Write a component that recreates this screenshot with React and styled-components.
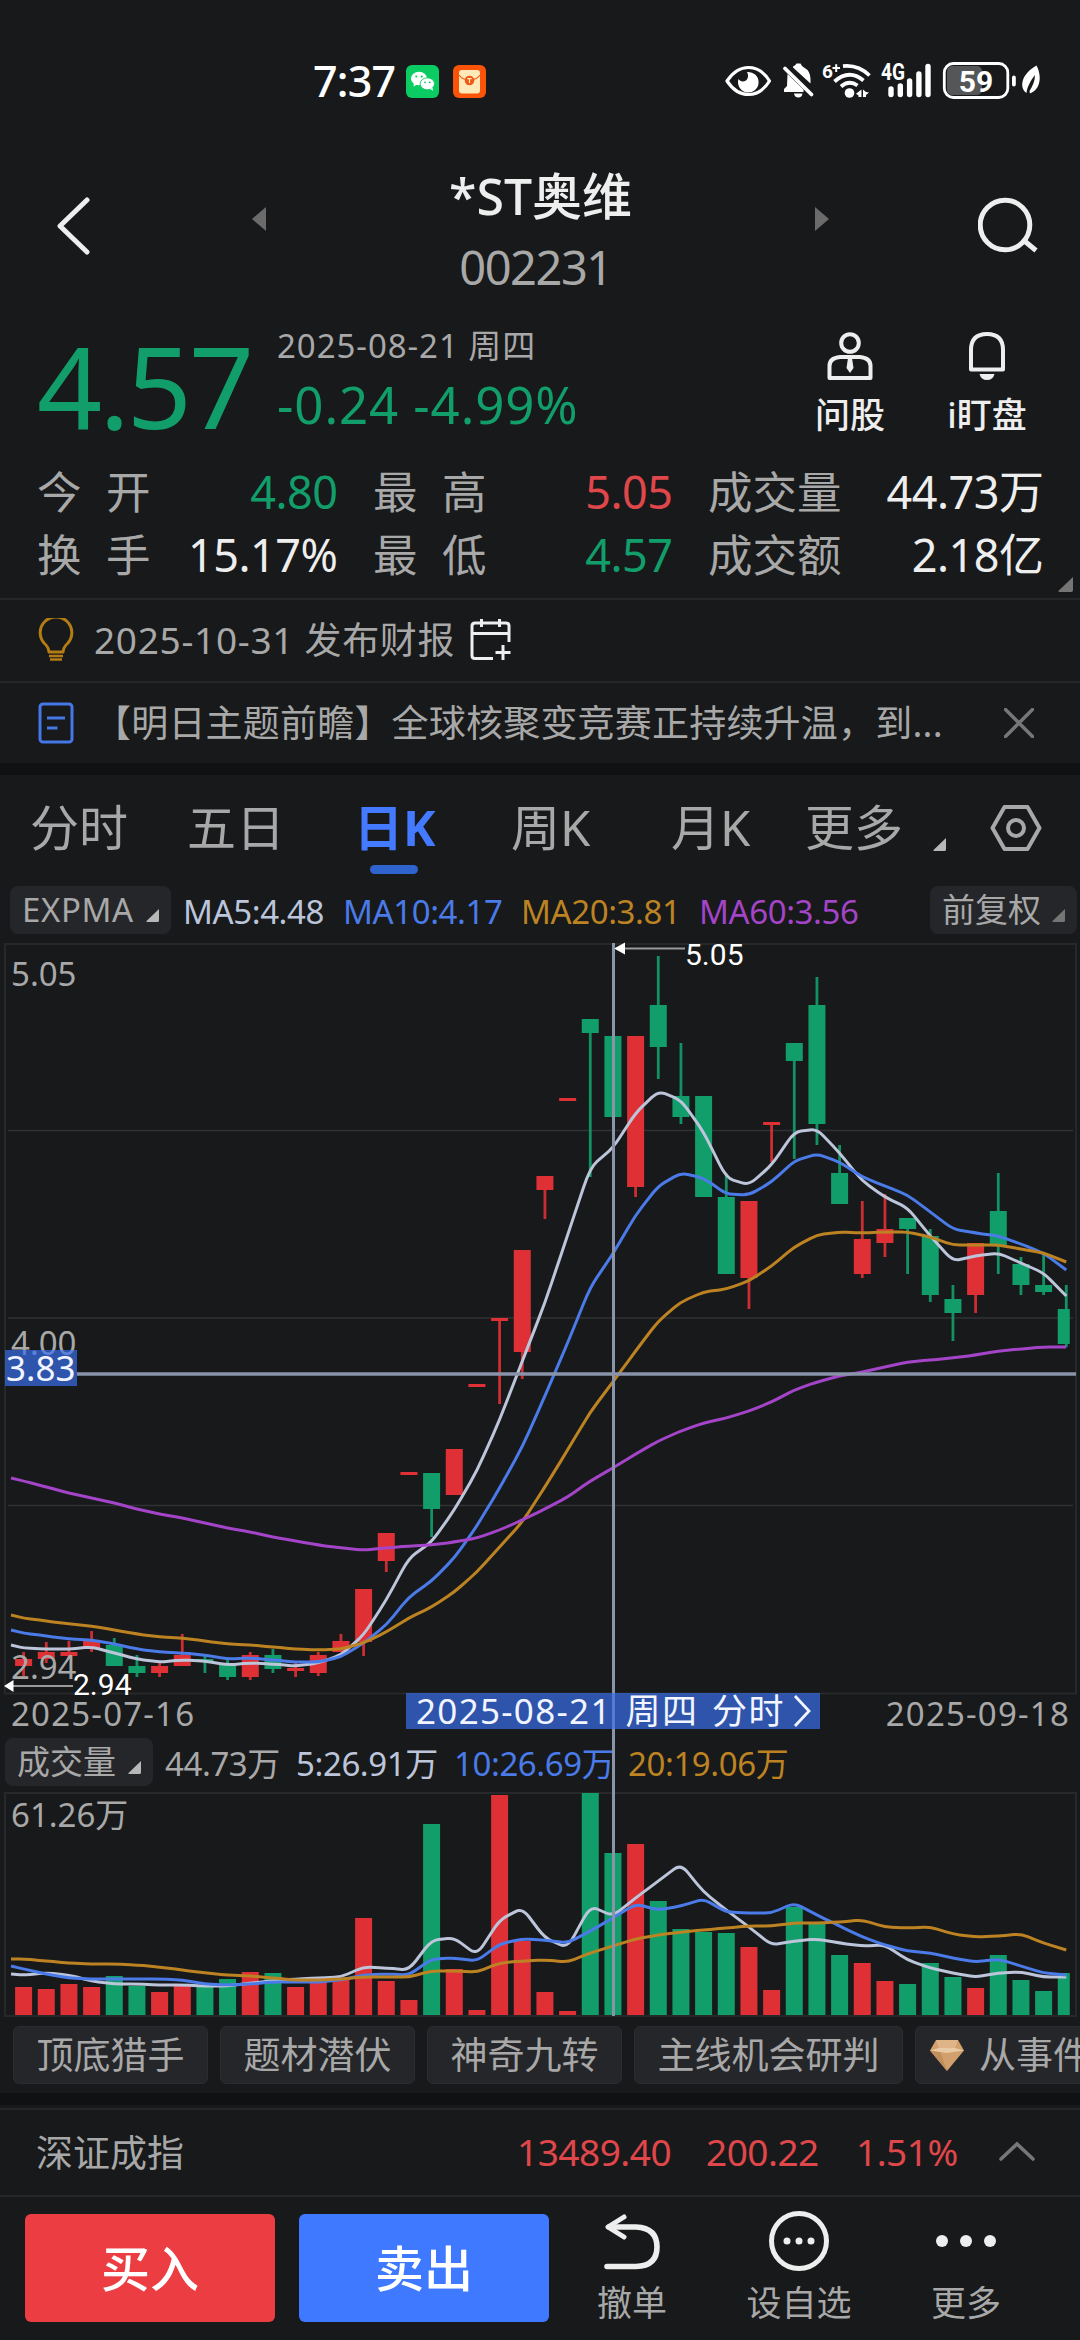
import React from 'react';
import styled, { createGlobalStyle, ThemeProvider } from 'styled-components';

const theme = {
  colors: {
    bg: '#17191a',
    band: '#101112',
    line: '#26282a',
    chip: '#252629',
    white: '#eeeeee',
    gray: '#a8a8a8',
    dim: '#6e6e6e',
    green: '#129e6a',
    red: '#df3135',
    redText: '#e0474a',
    blue: '#437aff',
    ma5: '#bcc5da',
    ma10: '#4a7be8',
    ma20: '#bd8323',
    ma60: '#a444c8',
    cross: '#8993a9',
  },
};

const FONT = '"Noto Sans", "Noto Sans CJK SC", sans-serif';

const STEP = 22.667;
const FIRST = 23.6;
const cx = (i) => FIRST + STEP * i;

// [up, high, body top, body bottom, low, volume top]
const CANDLES = [
  [1, 1652, 1659, 1666, 1676, 1987],
  [1, 1642, 1652, 1659, 1663, 1989],
  [1, 1641, 1652, 1656, 1659, 1984],
  [1, 1631, 1641, 1649, 1652, 1987],
  [0, 1638, 1645, 1666, 1666, 1976],
  [0, 1655, 1666, 1673, 1677, 1986],
  [1, 1663, 1666, 1673, 1677, 1992],
  [1, 1634, 1655, 1666, 1666, 1986],
  [0, 1655, 1659, 1661, 1673, 1986],
  [0, 1659, 1663, 1677, 1680, 1979],
  [1, 1652, 1655, 1677, 1680, 1972],
  [0, 1649, 1655, 1669, 1673, 1973],
  [1, 1663, 1668, 1671, 1677, 1987],
  [1, 1652, 1655, 1673, 1676, 1982],
  [1, 1634, 1641, 1652, 1652, 1979],
  [1, 1589, 1589, 1642, 1656, 1918],
  [1, 1533, 1533, 1561, 1572, 1981],
  [1, 1472, 1472, 1475, 1475, 2000],
  [0, 1473, 1473, 1509, 1537, 1824],
  [1, 1449, 1449, 1495, 1495, 1969],
  [1, 1384, 1384, 1387, 1387, 2010],
  [1, 1318, 1318, 1321, 1404, 1795],
  [1, 1250, 1250, 1352, 1379, 1941],
  [1, 1176, 1176, 1190, 1219, 1992],
  [1, 1098, 1098, 1101, 1101, 2011],
  [0, 1019, 1019, 1033, 1177, 1793],
  [0, 1036, 1036, 1117, 1117, 1853],
  [1, 1036, 1036, 1187, 1197, 1844],
  [0, 956, 1005, 1047, 1079, 1901],
  [0, 1043, 1096, 1117, 1124, 1929],
  [0, 1096, 1096, 1197, 1197, 1932],
  [0, 1173, 1197, 1274, 1274, 1933],
  [1, 1201, 1201, 1278, 1309, 1947],
  [1, 1122, 1122, 1125, 1162, 1990],
  [0, 1043, 1043, 1061, 1159, 1907],
  [0, 977, 1005, 1124, 1145, 1923],
  [0, 1145, 1173, 1204, 1204, 1955],
  [1, 1201, 1239, 1274, 1278, 1963],
  [1, 1194, 1229, 1243, 1257, 1981],
  [0, 1218, 1218, 1229, 1274, 1984],
  [0, 1229, 1236, 1295, 1302, 1963],
  [0, 1285, 1299, 1313, 1341, 1977],
  [1, 1243, 1243, 1295, 1313, 1988],
  [0, 1173, 1211, 1245, 1274, 1955],
  [0, 1257, 1264, 1285, 1295, 1980],
  [0, 1252, 1285, 1292, 1295, 1991],
  [0, 1285, 1309, 1344, 1347, 1973],
];

// the first value of every series sits on the left edge of the plot
const PRICE_LINES = {
  ma5: [
    1645, 1648, 1649, 1649, 1647, 1653, 1659, 1662, 1660, 1661, 1665, 1663, 1664, 1666, 1663, 1655,
    1635, 1600, 1558, 1542, 1510, 1471, 1420, 1361, 1303, 1235, 1167, 1148, 1113, 1091, 1100, 1132,
    1178, 1185, 1165, 1132, 1129, 1153, 1181, 1197, 1208, 1236, 1261, 1256, 1253, 1263, 1273, 1296,
  ],
  ma10: [
    1630, 1633, 1636, 1639, 1640, 1644, 1649, 1652, 1653, 1655, 1659, 1658, 1660, 1662, 1662, 1657,
    1643, 1625, 1597, 1581, 1558, 1526, 1488, 1447, 1396, 1343, 1287, 1254, 1215, 1186, 1173, 1178,
    1194, 1195, 1182, 1161, 1154, 1162, 1177, 1186, 1195, 1212, 1229, 1233, 1236, 1244, 1253, 1270,
  ],
  ma20: [
    1615, 1618, 1621, 1624, 1626, 1630, 1634, 1637, 1638, 1641, 1644, 1645, 1647, 1649, 1650, 1649,
    1643, 1632, 1618, 1607, 1592, 1572, 1547, 1522, 1487, 1450, 1412, 1382, 1351, 1321, 1302, 1292,
    1289, 1281, 1266, 1247, 1235, 1232, 1233, 1232, 1232, 1237, 1245, 1245, 1245, 1249, 1253, 1262,
  ],
  ma60: [
    1478, 1481, 1487, 1493, 1498, 1503, 1509, 1514, 1518, 1523, 1528, 1532, 1537, 1541, 1545, 1548,
    1550, 1548, 1546, 1545, 1542, 1538, 1530, 1520, 1509, 1497, 1481, 1468, 1454, 1441, 1431, 1423,
    1418, 1411, 1402, 1390, 1382, 1376, 1372, 1367, 1362, 1360, 1358, 1355, 1351, 1349, 1347, 1347,
  ],
};

const VOLUME_LINES = {
  ma5: [
    1974, 1975, 1973, 1975, 1981, 1984, 1984, 1985, 1985, 1986, 1986, 1983, 1981, 1979, 1978, 1977,
    1967, 1968, 1970, 1940, 1938, 1955, 1920, 1908, 1938, 1948, 1906, 1916, 1898, 1881, 1864, 1892,
    1910, 1927, 1945, 1941, 1939, 1943, 1946, 1945, 1960, 1968, 1973, 1977, 1973, 1972, 1977, 1977,
  ],
  ma10: [
    1966, 1969, 1974, 1978, 1979, 1979, 1979, 1979, 1980, 1984, 1985, 1984, 1982, 1982, 1982, 1980,
    1975, 1974, 1975, 1959, 1958, 1961, 1944, 1939, 1940, 1943, 1931, 1918, 1904, 1910, 1906, 1899,
    1912, 1913, 1913, 1903, 1915, 1926, 1937, 1945, 1951, 1953, 1958, 1962, 1959, 1966, 1973, 1975,
  ],
  ma20: [
    1959, 1959, 1961, 1963, 1964, 1964, 1965, 1967, 1970, 1973, 1975, 1976, 1978, 1980, 1980, 1979,
    1977, 1977, 1977, 1971, 1971, 1972, 1963, 1961, 1960, 1962, 1953, 1946, 1939, 1935, 1932, 1930,
    1928, 1926, 1926, 1923, 1923, 1922, 1920, 1927, 1928, 1927, 1934, 1937, 1936, 1934, 1943, 1950,
  ],
};

// polyline with slightly rounded corners
const toPath = (values) => {
  const pts = values.map((y, i) => [i === 0 ? 11 : cx(i - 1), y]);
  const mix = (a, b, t) => `${(a[0] + (b[0] - a[0]) * t).toFixed(1)} ${(a[1] + (b[1] - a[1]) * t).toFixed(1)}`;
  let d = `M${pts[0].join(' ')}`;
  for (let i = 1; i < pts.length - 1; i += 1) {
    d += `L${mix(pts[i], pts[i - 1], 0.3)}Q${pts[i].join(' ')} ${mix(pts[i], pts[i + 1], 0.3)}`;
  }
  return `${d}L${pts[pts.length - 1].join(' ')}`;
};

const bodyWidth = (i) => (i === CANDLES.length - 1 ? 12 : 17);

const { colors } = theme;

const PriceChart = () => (
  <ChartSvg height="751" viewBox="0 943 1080 751">
    <path d="M5 1693.5V944H1076V1693.5Z" stroke={colors.line} strokeWidth="2" fill="none" />
    <path d="M8 1130.5H1073M8 1318H1073M8 1505.5H1073" stroke="#303234" strokeWidth="1.4" />
    {CANDLES.map(([up, high, top, bottom, low], i) => (
      <g key={i} fill={up ? colors.red : colors.green}>
        <rect x={cx(i) - 1.4} y={high} width="2.8" height={low - high} opacity="0.9" />
        <rect x={cx(i) - 8.5} y={top} width={bodyWidth(i)} height={bottom - top} />
      </g>
    ))}
    <AxisText x="11" y="986">5.05</AxisText>
    <AxisText x="11" y="1355">4.00</AxisText>
    <AxisText x="11" y="1679">2.94</AxisText>
    {Object.entries(PRICE_LINES).map(([key, values]) => (
      <path key={key} d={toPath(values)} stroke={colors[key]} strokeWidth="3" fill="none" />
    ))}
    <path d="M624 948.5H685M12 1686H73" stroke="#9a9a9a" strokeWidth="2" />
    <path d="M614 948.5L625 942.5V954.5ZM4 1686L13.500 1680V1692Z" fill="#fff" />
    <MarkText x="685" y="965">5.05</MarkText>
    <MarkText x="73" y="1695">2.94</MarkText>
    <path d="M77 1374H1076" stroke={colors.cross} strokeWidth="3.6" />
    <rect x="5" y="1350" width="72" height="36" fill="rgba(58,112,240,0.68)" />
    <TagText x="6" y="1381">3.83</TagText>
  </ChartSvg>
);

const VolumeChart = () => (
  <ChartSvg height="225" viewBox="0 1792 1080 225">
    <path d="M5 2016V1793H1076V2016Z" stroke={colors.line} strokeWidth="2" fill="none" />
    {CANDLES.map(([up, , , , , top], i) => (
      <rect
        key={i}
        x={cx(i) - 8.5}
        y={top}
        width={bodyWidth(i)}
        height={2015 - top}
        fill={up ? colors.red : colors.green}
      />
    ))}
    <AxisText x="11" y="1827">61.26万</AxisText>
    {Object.entries(VOLUME_LINES).map(([key, values]) => (
      <path key={key} d={toPath(values)} stroke={colors[key]} strokeWidth="3" fill="none" />
    ))}
  </ChartSvg>
);

const StatusIcons = () => (
  <svg width="320" height="50" viewBox="722 56 320 50" fill="#fff">
    <path
      d="M727 81C733 72 740 67.500 748.500 67.500S764 72 769.500 81C764 90 757 94.500 748.500 94.500S733 90 727 81Z"
      fill="none"
      stroke="#fff"
      strokeWidth="3.200"
      strokeLinejoin="round"
    />
    <path d="M747 72A10.300 10.300 0 1 1 738.500 79C740.500 82.500 746 82 747.500 78.500C748.500 76 748 74 747 72Z" />
    <path d="M793 66.500Q795.500 65.500 796.500 63.500H800.500Q801.500 66 804 67.500Q810.500 71 810.500 79V83.500L793 67.500Z" />
    <path d="M787.500 74L803.500 89.500V92H784V89L787 86Z" />
    <path d="M785 68.500L811.500 94.500" stroke="#fff" strokeWidth="3.800" strokeLinecap="round" />
    <path d="M794 93.500H802.500Q802 97.500 798.300 97.500T794 93.500Z" />
    <g fill="none" stroke="#fff" strokeWidth="3.800">
      <path d="M843 66.200Q858 64.500 869.500 75.500" />
      <path d="M834.500 81.500Q849 68.500 863.500 80.500" />
      <path d="M841 86.500Q849 79.500 857.500 85.500" />
    </g>
    <circle cx="849.500" cy="93" r="4.800" />
    <path d="M861.500 89.500V97H858.500V95.500L856 93.800ZM863 89.500V97H866V95L869 92.500L866 92Z" />
    <SmallText x="822" y="77.500">6</SmallText>
    <path d="M832.500 68H840M836.200 64.200V72" stroke="#fff" strokeWidth="2" />
    <NetText x="881" y="80" textLength="24" lengthAdjust="spacingAndGlyphs">4G</NetText>
    <path
      d="M891 89V94.500M900.300 86V94.500M909.600 81V94.500M918.900 74V94.500M928 66.500V94.500"
      stroke="#fff"
      strokeWidth="5.400"
      strokeLinecap="round"
    />
    <rect x="947" y="66" width="35" height="29" rx="5" fill="#555657" />
    <rect x="944.300" y="63.500" width="63.500" height="34" rx="9" fill="none" stroke="#fff" strokeWidth="2.800" />
    <rect x="1012" y="75.500" width="3.800" height="11" rx="1.900" />
    <BatteryText x="976" y="91.500">59</BatteryText>
    <path d="M1036.500 65.500C1042 76 1041 89 1030 93.500L1029.500 91C1033 86 1035 80 1035 75C1031 80 1027 87 1026.500 93C1019 88 1021 74 1036.500 65.500Z" />
  </svg>
);

const WeChatIcon = () => (
  <svg width="33" height="33" viewBox="0 0 33 33">
    <rect width="33" height="33" rx="6" fill="#0bcb63" />
    <g fill="#fff">
      <ellipse cx="13" cy="13.500" rx="8" ry="6.800" />
      <path d="M8 18L7.500 21.500L11 19.500Z" />
      <ellipse cx="21.300" cy="18.800" rx="7.200" ry="6" stroke="#0bcb63" strokeWidth="0.900" />
      <path d="M24 24L27 25.800L26.500 22.500Z" />
    </g>
    <g fill="#0bcb63">
      <circle cx="10.300" cy="11.500" r="1.100" />
      <circle cx="15.700" cy="11.500" r="1.100" />
      <circle cx="19" cy="17.300" r="0.900" />
      <circle cx="23.700" cy="17.300" r="0.900" />
    </g>
  </svg>
);

const EnvelopeIcon = () => (
  <svg width="33" height="33" viewBox="0 0 33 33">
    <rect width="33" height="33" rx="6" fill="#fa540b" />
    <rect x="6" y="5" width="21" height="23.500" rx="3" fill="#fdeab8" />
    <path d="M6 10Q9.500 15 16.500 15T27 10" fill="none" stroke="#f0641e" strokeWidth="1.300" />
    <circle cx="16.500" cy="15.500" r="4.800" fill="#ef5a17" />
    <path d="M14.300 13.700H18.700M16.500 13.700V18" stroke="#fdeab8" strokeWidth="1.200" />
  </svg>
);

const Corner = ({ size = 13, color = '#b8b8b8' }) => (
  <svg width={size} height={size} viewBox="0 0 13 13">
    <path d="M13 0V11.500Q13 13 11.500 13H1Q0 13 0.500 12Z" fill={color} />
  </svg>
);

const STATS = [
  { label: '今 开', value: '4.80', tone: 'green' },
  { label: '最 高', value: '5.05', tone: 'redText' },
  { label: '成交量', value: '44.73万', tone: 'white' },
  { label: '换 手', value: '15.17%', tone: 'white' },
  { label: '最 低', value: '4.57', tone: 'green' },
  { label: '成交额', value: '2.18亿', tone: 'white' },
];

const TABS = ['分时', '五日', '日K', '周K', '月K', '更多'];
const CHIPS = ['顶底猎手', '题材潜伏', '神奇九转', '主线机会研判'];

const App = () => (
  <ThemeProvider theme={theme}>
    <GlobalStyle />
    <Screen>
      <StatusBar>
        <Clock>7:37</Clock>
        <WeChatIcon />
        <EnvelopeIcon />
        <StatusIcons />
      </StatusBar>

      <Header>
        <HeaderIcon $top={35}>
          <svg width="34" height="58" viewBox="0 0 34 58" fill="none">
            <path d="M30 3L3 29L30 55" stroke="#eee" strokeWidth="5" strokeLinecap="round" strokeLinejoin="round" />
          </svg>
        </HeaderIcon>
        <HeaderIcon $top={45} $left={161}>
          <svg width="14" height="24" viewBox="0 0 14 24">
            <path d="M14 0V24L0 12Z" fill="#6b6b6b" />
          </svg>
        </HeaderIcon>
        <TitleBlock>
          <Title>*ST奥维</Title>
          <Code>002231</Code>
        </TitleBlock>
        <HeaderIcon $top={45} $right={149}>
          <svg width="14" height="24" viewBox="0 0 14 24">
            <path d="M0 0V24L14 12Z" fill="#6b6b6b" />
          </svg>
        </HeaderIcon>
        <HeaderIcon $top={35}>
          <svg width="60" height="56" viewBox="0 0 60 56" fill="none" stroke="#eee" strokeWidth="5">
            <circle cx="27" cy="28" r="24.800" />
            <path d="M46.500 44L58 53.500" strokeLinecap="butt" />
          </svg>
        </HeaderIcon>
      </Header>

      <Quote>
        <QuoteTop>
          <Price>4.57</Price>
          <Change>
            <ChangeDate>2025-08-21 周四</ChangeDate>
            <ChangeValue>-0.24 -4.99%</ChangeValue>
          </Change>
          <Action $width={88}>
            <svg width="48" height="48" viewBox="0 0 48 48" fill="none" stroke="#eee" strokeWidth="4">
              <circle cx="24" cy="11" r="8.800" />
              <path d="M14 25H34Q44.500 26 44.500 34V46H3.500V34Q3.500 26 14 25Z" strokeLinejoin="round" />
              <path d="M22 26H26L27.500 36L24 41L20.500 36Z" fill="#eee" stroke="none" />
            </svg>
            <ActionLabel>问股</ActionLabel>
          </Action>
          <Action $width={186}>
            <svg width="48" height="48" viewBox="0 0 48 48" fill="none" stroke="#eee" strokeWidth="4">
              <path d="M8 37.500V18Q8 2 24 2T40 18V37.500Z" strokeLinejoin="round" />
              <path d="M16.500 42H31.500Q30 48 24 48T16.500 42Z" fill="#eee" stroke="none" />
            </svg>
            <ActionLabel>i盯盘</ActionLabel>
          </Action>
        </QuoteTop>
        <Stats>
          {STATS.map((stat) => (
            <Stat key={stat.label}>
              <StatLabel>{stat.label}</StatLabel>
              <StatValue $tone={stat.tone}>{stat.value}</StatValue>
            </Stat>
          ))}
        </Stats>
        <QuoteCorner>
          <Corner size={15} color="#757575" />
        </QuoteCorner>
      </Quote>

      <Notice>
        <svg width="36" height="44" viewBox="0 0 36 44" fill="none" stroke="#b47c14" strokeWidth="3">
          <path d="M11 34Q10.500 29 6 25A15.800 15.800 0 1 1 30 25Q25.500 29 25 34Z" strokeLinejoin="round" />
          <path d="M11 38H25M12 41.500H24" strokeWidth="2.400" />
        </svg>
        <NoticeText $spacing={0.7}>2025-10-31 发布财报</NoticeText>
        <svg width="42" height="42" viewBox="0 0 42 42" fill="none" stroke="#eee" strokeWidth="3">
          <path d="M23 39.500H5Q2 39.500 2 36.500V7Q2 4 5 4H36Q39 4 39 7V23M2 14.500H39" />
          <path d="M11.500 0V8M29.500 0V8M33 26V41M25.500 33.500H40.500" />
        </svg>
      </Notice>
      <Notice>
        <svg width="36" height="42" viewBox="0 0 36 42" fill="none" stroke="#4577e6" strokeWidth="3">
          <rect x="2" y="2" width="32" height="38" rx="3" />
          <path d="M9 16H27M9 26H19.500" />
        </svg>
        <NoticeText $grow $spacing={0.2}>【明日主题前瞻】全球核聚变竞赛正持续升温，到...</NoticeText>
        <svg width="30" height="30" viewBox="0 0 30 30">
          <path d="M1.500 1.500L28.500 28.500M28.500 1.500L1.500 28.500" stroke="#777" strokeWidth="3.400" strokeLinecap="round" />
        </svg>
      </Notice>

      <Band />

      <Tabs>
        {TABS.map((tab) => (
          <Tab key={tab} $active={tab === '日K'}>
            {tab}
          </Tab>
        ))}
        <TabCorner>
          <Corner />
        </TabCorner>
        <svg width="52" height="48" viewBox="0 0 52 48" fill="none" stroke="#a8a8a8" strokeWidth="4">
          <path d="M14.500 3H37.500L49.500 24L37.500 45H14.500L2.500 24Z" strokeLinejoin="round" />
          <circle cx="26" cy="24" r="8" />
        </svg>
      </Tabs>

      <IndicatorRow>
        <Picker $width={161} $spacing={0.6}>
          <span>EXPMA</span>
          <Corner />
        </Picker>
        <Legend $tone="ma5" $left={12} $width={160}>MA5:4.48</Legend>
        <Legend $tone="ma10" $width={178}>MA10:4.17</Legend>
        <Legend $tone="ma20" $width={178}>MA20:3.81</Legend>
        <Legend $tone="ma60" $width={178}>MA60:3.56</Legend>
        <Picker $width={147} $push>
          <span>前复权</span>
          <Corner color="#757575" />
        </Picker>
      </IndicatorRow>

      <ChartPanel>
        <PriceChart />
        <DateRow>
          <span>2025-07-16</span>
          <DateTag>
            2025-08-21 周四 分时
            <svg width="18" height="34" viewBox="0 0 18 34" fill="none">
              <path d="M2 2L16 17L2 32" stroke="#f2f5ff" strokeWidth="2.800" />
            </svg>
          </DateTag>
          <EndDate>2025-09-18</EndDate>
        </DateRow>
        <VolumeRow>
          <Picker $width={148}>
            <span>成交量</span>
            <Corner />
          </Picker>
          <Legend $tone="gray" $left={12} $width={131}>44.73万</Legend>
          <Legend $tone="ma5" $width={158}>5:26.91万</Legend>
          <Legend $tone="ma10" $width={174}>10:26.69万</Legend>
          <Legend $tone="ma20" $width={174}>20:19.06万</Legend>
        </VolumeRow>
        <VolumeChart />
        <CrossHair />
      </ChartPanel>

      <Chips>
        {CHIPS.map((chip) => (
          <Chip key={chip}>{chip}</Chip>
        ))}
        <Chip $icon>
          <svg width="34" height="31" viewBox="0 0 34 31">
            <path d="M6 0H28L34 10.500L17 31L0 10.500Z" fill="#d2a06c" />
            <path d="M6 0H28L25 8H9Z" fill="#dfb486" />
            <path d="M0 10.500L9 8L17 31Z" fill="#c08f5d" />
            <path d="M9 8H25L34 10.500L17 13L0 10.500Z" fill="#e8cba6" />
          </svg>
          从事件
        </Chip>
      </Chips>

      <Band />

      <IndexRow>
        <IndexName>深证成指</IndexName>
        <IndexValue $width={189}>13489.40</IndexValue>
        <IndexValue $width={150}>200.22</IndexValue>
        <IndexValue $width={143}>1.51%</IndexValue>
        <svg width="36" height="20" viewBox="0 0 36 20" fill="none">
          <path d="M2 18L18 3L34 18" stroke="#777" strokeWidth="3.600" strokeLinecap="round" />
        </svg>
      </IndexRow>

      <BottomBar>
        <TradeButton $color="#ec3d42">买入</TradeButton>
        <TradeButton $color="#3f79ff">卖出</TradeButton>
        <BottomItem $width={166}>
          <svg width="60" height="62" viewBox="0 0 60 62" fill="none" stroke="#eee" strokeWidth="5.600" strokeLinecap="round" strokeLinejoin="round">
            <path d="M22 7L6 17L22 27" strokeWidth="5" />
            <path d="M7 17H34Q55 18 55 37T34 56.500H5" />
          </svg>
          <span>撤单</span>
        </BottomItem>
        <BottomItem $width={168}>
          <svg width="60" height="62" viewBox="0 0 60 62" fill="#eee">
            <circle cx="30" cy="31" r="27.500" fill="none" stroke="#eee" strokeWidth="5" />
            <circle cx="18" cy="31" r="3.500" />
            <circle cx="30" cy="31" r="3.500" />
            <circle cx="42" cy="31" r="3.500" />
          </svg>
          <span>设自选</span>
        </BottomItem>
        <BottomItem $width={166}>
          <svg width="60" height="62" viewBox="0 0 60 62" fill="#eee">
            <circle cx="6" cy="31" r="6" />
            <circle cx="30" cy="31" r="6" />
            <circle cx="54" cy="31" r="6" />
          </svg>
          <span>更多</span>
        </BottomItem>
      </BottomBar>
    </Screen>
  </ThemeProvider>
);

export default App;

const GlobalStyle = createGlobalStyle`
  * {
    box-sizing: border-box;
  }

  body {
    margin: 0;
    background: ${colors.bg};
    font-family: ${FONT};
  }

  svg {
    display: block;
    flex-shrink: 0;
  }
`;

const Screen = styled.div`
  width: 1080px;
  height: 2340px;
  overflow: hidden;
  display: flex;
  flex-direction: column;
  background: ${({ theme }) => theme.colors.bg};
  color: ${({ theme }) => theme.colors.gray};
  white-space: nowrap;
`;

const StatusBar = styled.div`
  height: 162px;
  flex-shrink: 0;
  display: flex;
  align-items: center;
  padding: 0 38px 0 313px;
  gap: 14px;

  svg:last-child {
    margin-left: auto;
  }
`;

const Clock = styled.div`
  width: 79px;
  margin-top: -2px;
  font-size: 43px;
  font-weight: 500;
  letter-spacing: -0.8px;
  color: #fff;
`;

const Header = styled.div`
  height: 148px;
  flex-shrink: 0;
  display: flex;
  align-items: flex-start;
  padding: 0 42px 0 57px;
`;

const HeaderIcon = styled.div`
  margin: ${({ $top }) => $top}px ${({ $right = 0 }) => $right}px 0 ${({ $left = 0 }) => $left}px;
`;

const TitleBlock = styled.div`
  flex: 1;
  text-align: center;
`;

const Title = styled.div`
  font-size: 50px;
  font-weight: 500;
  line-height: 68px;
  color: ${({ theme }) => theme.colors.white};
`;

const Code = styled.div`
  font-size: 47px;
  line-height: 75px;
  letter-spacing: -1.5px;
  margin-left: -10px;
`;

const Quote = styled.div`
  position: relative;
  height: 288px;
  flex-shrink: 0;
`;

const QuoteTop = styled.div`
  display: flex;
  height: 150px;
  padding-left: 37px;
`;

const Price = styled.div`
  width: 240px;
  font-size: 114px;
  line-height: 149px;
  letter-spacing: -3px;
  color: ${({ theme }) => theme.colors.green};
`;

const Change = styled.div`
  flex: 1;
`;

const ChangeDate = styled.div`
  font-size: 33px;
  line-height: 71px;
  letter-spacing: 0.95px;
`;

const ChangeValue = styled.div`
  font-size: 51px;
  line-height: 46px;
  letter-spacing: 0.9px;
  color: ${({ theme }) => theme.colors.green};
`;

const Action = styled.div`
  width: ${({ $width }) => $width}px;
  padding-top: 22px;
  display: flex;
  flex-direction: column;
  align-items: center;
`;

const ActionLabel = styled.div`
  margin-top: 11px;
  font-size: 35px;
  font-weight: 500;
  line-height: 48px;
  color: ${({ theme }) => theme.colors.white};
`;

const Stats = styled.div`
  display: grid;
  grid-template-columns: 299px 298px 334px;
  column-gap: 37px;
  padding: 0 37px;
`;

const Stat = styled.div`
  height: 63px;
  display: flex;
  align-items: center;
  justify-content: space-between;
`;

const StatLabel = styled.span`
  font-size: 44.5px;
  line-height: 63px;
  word-spacing: 13px;
`;

const StatValue = styled.span`
  margin-right: -1.5px;
  font-size: 45px;
  line-height: 62px;
  letter-spacing: -0.5px;
  color: ${({ theme, $tone }) => theme.colors[$tone]};
`;

const QuoteCorner = styled.div`
  position: absolute;
  right: 7px;
  bottom: 6px;
`;

const Notice = styled.div`
  height: 82.5px;
  flex-shrink: 0;
  display: flex;
  align-items: center;
  padding: 0 46px 0 38px;
  border-top: 2px solid #242628;
`;

const NoticeText = styled.div`
  flex-grow: ${({ $grow }) => ($grow ? 1 : 0)};
  margin-left: 20px;
  margin-right: 15px;
  font-size: 37px;
  line-height: 54px;
  letter-spacing: ${({ $spacing = 0 }) => $spacing}px;
`;

const Band = styled.div`
  height: 12px;
  flex-shrink: 0;
  background: ${({ theme }) => theme.colors.band};
`;

const Tabs = styled.div`
  height: 105px;
  flex-shrink: 0;
  display: grid;
  grid-template-columns: 157px 167px 157px 160px 134px 127px 57px 52px;
  align-items: center;
  padding-left: 31px;
`;

const Tab = styled.div`
  position: relative;
  justify-self: start;
  font-size: 49px;
  line-height: 105px;
  margin-left: -1px;
  font-weight: ${({ $active }) => ($active ? 700 : 400)};
  color: ${({ theme, $active }) => ($active ? theme.colors.blue : theme.colors.gray)};

  &::after {
    content: '';
    display: ${({ $active }) => ($active ? 'block' : 'none')};
    position: absolute;
    left: 16px;
    bottom: 6px;
    width: 48px;
    height: 9px;
    border-radius: 5px;
    background: #2f63cd;
  }
`;

const TabCorner = styled.div`
  margin-top: 33px;
`;

const IndicatorRow = styled.div`
  height: 63px;
  flex-shrink: 0;
  display: flex;
  padding: 6px 3px 0 10px;
`;

const Picker = styled.div`
  width: ${({ $width }) => $width}px;
  height: 48px;
  margin-left: ${({ $push }) => ($push ? 'auto' : '0')};
  padding: 0 12px;
  display: flex;
  align-items: center;
  justify-content: space-between;
  border-radius: 8px;
  background: ${({ theme }) => theme.colors.chip};
  font-size: 33px;
  line-height: 50px;
  letter-spacing: ${({ $spacing = 0 }) => $spacing}px;

  svg {
    margin-top: 11px;
  }
`;

const Legend = styled.div`
  width: ${({ $width }) => $width}px;
  margin-left: ${({ $left = 0 }) => $left}px;
  font-size: 33px;
  line-height: 51px;
  letter-spacing: -0.4px;
  color: ${({ theme, $tone }) => theme.colors[$tone]};
`;

const ChartPanel = styled.div`
  position: relative;
  flex-shrink: 0;
`;

const ChartSvg = styled.svg`
  width: 1080px;
  overflow: visible;
`;

const AxisText = styled.text`
  font: 400 33px ${FONT};
  fill: ${({ theme }) => theme.colors.gray};
`;

const MarkText = styled.text`
  font: 400 30px Roboto, sans-serif;
  fill: #fff;
`;

const TagText = styled.text`
  font: 400 35px ${FONT};
  fill: #f2f5ff;
`;

const SmallText = styled.text`
  font: 700 19px Roboto, sans-serif;
`;

const NetText = styled.text`
  font: 700 23px Roboto, sans-serif;
`;

const BatteryText = styled.text`
  font: 700 30px Roboto, sans-serif;
  text-anchor: middle;
`;

const DateRow = styled.div`
  height: 38px;
  display: grid;
  grid-template-columns: 395px 414px 1fr;
  padding: 0 10px 0 11px;
  font-size: 33px;
  line-height: 39px;
  letter-spacing: 1.2px;
`;

const DateTag = styled.div`
  position: relative;
  z-index: 2;
  height: 36px;
  margin-top: -1px;
  padding: 0 9px 0 10px;
  display: flex;
  align-items: center;
  justify-content: space-between;
  background: rgba(58, 112, 240, 0.68);
  color: #f2f5ff;
  font-size: 35px;
  line-height: 36px;
  letter-spacing: 1.3px;
  word-spacing: 3.5px;
`;

const EndDate = styled.span`
  text-align: right;
`;

const VolumeRow = styled.div`
  height: 60px;
  display: flex;
  padding: 6px 0 0 5px;
`;

const CrossHair = styled.div`
  position: absolute;
  z-index: 1;
  top: 0;
  bottom: 1px;
  left: 611.5px;
  width: 3.6px;
  background: ${({ theme }) => theme.colors.cross};
`;

const Chips = styled.div`
  height: 76px;
  flex-shrink: 0;
  display: flex;
  gap: 12px;
  padding: 9px 0 0 13px;
  overflow: hidden;
`;

const Chip = styled.div`
  height: 58px;
  flex-shrink: 0;
  display: flex;
  align-items: center;
  gap: 15px;
  padding: 0 ${({ $icon }) => ($icon ? 14 : 22.5)}px;
  border: 1px solid #2b2c2f;
  border-radius: 6px;
  background: ${({ theme }) => theme.colors.chip};
  font-size: 37px;
  line-height: 56px;
`;

const IndexRow = styled.div`
  height: 87px;
  flex-shrink: 0;
  margin-top: 3px;
  display: flex;
  align-items: center;
  padding: 0 0 3px 36px;
  border-top: 2px solid #242628;
  font-size: 37px;
`;

const IndexName = styled.div`
  width: 481px;
`;

const IndexValue = styled.div`
  width: ${({ $width }) => $width}px;
  letter-spacing: -0.5px;
  color: ${({ theme }) => theme.colors.redText};
`;

const BottomBar = styled.div`
  flex: 1;
  display: flex;
  padding: 17px 0 0 25px;
  border-top: 2px solid #242628;
`;

const TradeButton = styled.div`
  width: 250px;
  height: 108px;
  margin-right: 24px;
  border-radius: 6px;
  background: ${({ $color }) => $color};
  color: #fff;
  font-size: 49px;
  font-weight: 500;
  line-height: 109px;
  text-align: center;
`;

const BottomItem = styled.div`
  width: ${({ $width }) => $width}px;
  display: flex;
  flex-direction: column;
  align-items: center;
  margin-top: -4px;
  font-size: 35px;
  line-height: 62px;

  &:nth-child(3) {
    margin-left: -24px;
  }
`;
